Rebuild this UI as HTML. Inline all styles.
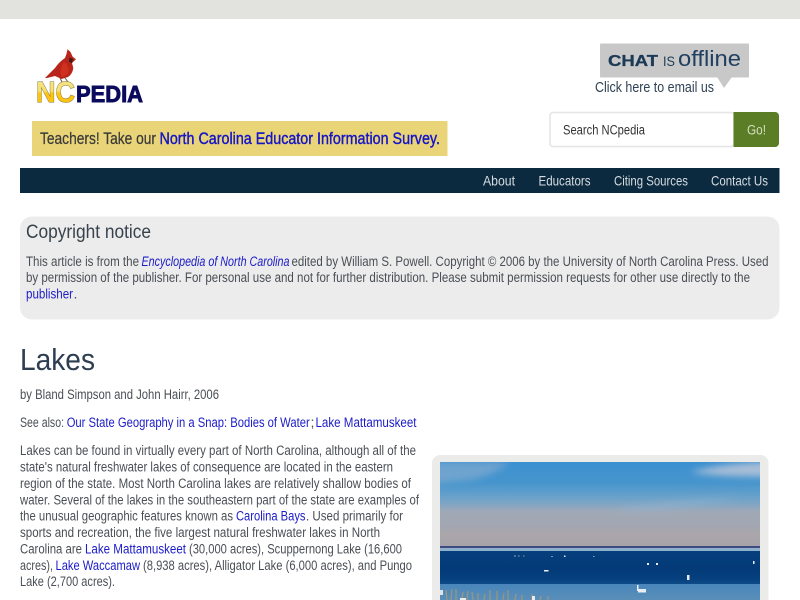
<!DOCTYPE html>
<html lang="en"><head><meta charset="utf-8"><title>Lakes | NCpedia</title>
<style>
html,body{margin:0;padding:0;background:#fff;width:800px;height:600px;overflow:hidden}
svg{display:block;filter:blur(.3px)}
text{font-family:"Liberation Sans",Arial,sans-serif;font-size:14.2px;fill:#4a4f55}
.l{fill:#1c1cc8}
.n{fill:#d5dbe0;font-size:14px}
</style></head><body>
<svg xmlns="http://www.w3.org/2000/svg" width="800" height="600" viewBox="0 0 800 600">
<defs>
<linearGradient id="sky" x1="0" y1="0" x2="0" y2="1">
<stop offset="0" stop-color="#3c90d0"/><stop offset=".25" stop-color="#4795cd"/><stop offset=".42" stop-color="#6ba2ca"/><stop offset=".58" stop-color="#98a9bc"/><stop offset=".85" stop-color="#aaa6ab"/><stop offset="1" stop-color="#a5a2a8"/>
</linearGradient>
<linearGradient id="wat" x1="0" y1="0" x2="0" y2="1">
<stop offset="0" stop-color="#063f7d"/><stop offset=".5" stop-color="#043a78"/><stop offset=".85" stop-color="#06407e"/><stop offset="1" stop-color="#0d4c88"/>
</linearGradient>
<linearGradient id="low" x1="0" y1="0" x2="0" y2="1">
<stop offset="0" stop-color="#4a86bb"/><stop offset="1" stop-color="#5a8fb8"/>
</linearGradient>
<linearGradient id="nc" x1="0" y1="0" x2="0" y2="1">
<stop offset="0" stop-color="#f5e58c"/><stop offset=".45" stop-color="#f5df70"/><stop offset=".5" stop-color="#fcc512"/><stop offset="1" stop-color="#fcc30c"/>
</linearGradient>
<filter id="soft" x="-20%" y="-50%" width="140%" height="200%"><feGaussianBlur stdDeviation="3.5"/></filter>
<clipPath id="ph"><rect x="440" y="462" width="320" height="138"/></clipPath>
</defs>
<rect width="800" height="600" fill="#fff"/>
<rect width="800" height="19" fill="#e2e2de"/>

<!-- logo -->
<path d="M45 78 L55 68 Q59 62 65 58 L66.5 54 L67.5 49.3 L70.5 52 L72.7 56.7 L76 59.3 L72 63 L73.3 68 Q72.5 74 68 77 L61.7 79 L55 76 L47 78 Z" fill="#b9241b"/>
<path d="M64 62 Q70 66 68 74 L62 77 Q58 72 64 62 Z" fill="#d0301f"/>
<path d="M69.5 57.5 L73 59 L72 63 L69 62 Z" fill="#3a1a14"/>
<path d="M60 78 L62 82 M65 78 L68 82" stroke="#6b5a40" stroke-width="1" fill="none"/>
<text x="36" y="102" textLength="39" lengthAdjust="spacingAndGlyphs" style="font-size:29px;font-weight:bold;fill:url(#nc);stroke:#7d7134;stroke-width:.9px;paint-order:stroke">NC</text>
<text x="76" y="102" textLength="67" lengthAdjust="spacingAndGlyphs" style="font-size:23px;font-weight:bold;fill:#0b0b5e;stroke:#0b0b5e;stroke-width:.9px">PEDIA</text>

<!-- banner -->
<rect x="32" y="121" width="415.5" height="35" fill="#e9d478"/>
<text x="40" y="144" textLength="116" lengthAdjust="spacingAndGlyphs" style="font-size:16.5px;fill:#3a3a3a;stroke:#3a3a3a;stroke-width:.25px">Teachers! Take our</text>
<a href="#"><text x="159.5" y="144" textLength="280.5" lengthAdjust="spacingAndGlyphs" style="font-size:16.5px;fill:#1414c8;stroke:#1414c8;stroke-width:.4px">North Carolina Educator Information Survey.</text></a>

<!-- chat -->
<rect x="600" y="43.5" width="149" height="34" rx="1" fill="#c8c8c8"/>
<path d="M717 77 L732 77 L724 88 Z" fill="#c8c8c8"/>
<text x="608" y="66" textLength="50" lengthAdjust="spacingAndGlyphs" style="font-size:16px;font-weight:bold;fill:#1b3a55;stroke:#1b3a55;stroke-width:.3px">CHAT</text>
<text x="663" y="66" textLength="12" lengthAdjust="spacingAndGlyphs" style="font-size:14px;fill:#1b3a55">IS</text>
<text x="678" y="66" textLength="63" lengthAdjust="spacingAndGlyphs" style="font-size:22px;fill:#1f4060">offline</text>
<a href="#"><text x="595" y="92" textLength="119" lengthAdjust="spacingAndGlyphs" style="font-size:14.5px;fill:#2f4256">Click here to email us</text></a>

<!-- search -->
<rect x="550" y="112.5" width="184" height="34" rx="3" fill="#fff" stroke="#e3e6e5" stroke-width="1.6"/>
<text x="563" y="134.5" textLength="82" lengthAdjust="spacingAndGlyphs" style="fill:#333">Search NCpedia</text>
<path d="M733.5 112 H775 a4 4 0 0 1 4 4 V143 a4 4 0 0 1 -4 4 H733.5 Z" fill="#5a7d26"/>
<text x="747" y="134.5" textLength="19" lengthAdjust="spacingAndGlyphs" style="fill:#d6dfc0">Go!</text>

<!-- nav -->
<rect x="20" y="168" width="759.5" height="25" fill="#0c2a3f"/>
<a href="#"><text class="n" x="483" y="185.5" textLength="32" lengthAdjust="spacingAndGlyphs">About</text></a>
<a href="#"><text class="n" x="538.5" y="185.5" textLength="52" lengthAdjust="spacingAndGlyphs">Educators</text></a>
<a href="#"><text class="n" x="614" y="185.5" textLength="74" lengthAdjust="spacingAndGlyphs">Citing Sources</text></a>
<a href="#"><text class="n" x="711" y="185.5" textLength="57" lengthAdjust="spacingAndGlyphs">Contact Us</text></a>

<!-- copyright box -->
<rect x="20" y="216.5" width="759.5" height="103" rx="12" fill="#ececec"/>
<text x="26" y="238" textLength="125" lengthAdjust="spacingAndGlyphs" style="font-size:19px;fill:#37424d">Copyright notice</text>
<text x="26" y="266" textLength="113" lengthAdjust="spacingAndGlyphs">This article is from the</text>
<a href="#"><text class="l" x="141.5" y="266" textLength="148" lengthAdjust="spacingAndGlyphs" style="font-style:italic">Encyclopedia of North Carolina</text></a>
<text x="291.5" y="266" textLength="477" lengthAdjust="spacingAndGlyphs">edited by William S. Powell. Copyright © 2006 by the University of North Carolina Press. Used</text>
<text x="26" y="282" textLength="724" lengthAdjust="spacingAndGlyphs">by permission of the publisher. For personal use and not for further distribution. Please submit permission requests for other use directly to the</text>
<a href="#"><text class="l" x="26" y="298.5" textLength="47" lengthAdjust="spacingAndGlyphs">publisher</text></a>
<text x="73.5" y="298.5">.</text>

<!-- title -->
<text x="20" y="370" textLength="75" lengthAdjust="spacingAndGlyphs" style="font-size:31px;fill:#2c3e50">Lakes</text>
<text x="20" y="399" textLength="199" lengthAdjust="spacingAndGlyphs">by Bland Simpson and John Hairr, 2006</text>
<text x="20" y="427" textLength="44" lengthAdjust="spacingAndGlyphs">See also:</text>
<a href="#"><text class="l" x="66.7" y="427" textLength="243" lengthAdjust="spacingAndGlyphs">Our State Geography in a Snap: Bodies of Water</text></a>
<text x="310.5" y="427">;</text>
<a href="#"><text class="l" x="315.5" y="427" textLength="101" lengthAdjust="spacingAndGlyphs">Lake Mattamuskeet</text></a>

<!-- paragraph -->
<text x="20" y="455" textLength="396" lengthAdjust="spacingAndGlyphs">Lakes can be found in virtually every part of North Carolina, although all of the</text>
<text x="20" y="471.5" textLength="373" lengthAdjust="spacingAndGlyphs">state's natural freshwater lakes of consequence are located in the eastern</text>
<text x="20" y="488" textLength="391" lengthAdjust="spacingAndGlyphs">region of the state. Most North Carolina lakes are relatively shallow bodies of</text>
<text x="20" y="504.5" textLength="399" lengthAdjust="spacingAndGlyphs">water. Several of the lakes in the southeastern part of the state are examples of</text>
<text x="20" y="520.5" textLength="213" lengthAdjust="spacingAndGlyphs">the unusual geographic features known as</text>
<a href="#"><text class="l" x="236" y="520.5" textLength="69.5" lengthAdjust="spacingAndGlyphs">Carolina Bays</text></a>
<text x="306" y="520.5" textLength="97" lengthAdjust="spacingAndGlyphs">. Used primarily for</text>
<text x="20" y="537" textLength="360" lengthAdjust="spacingAndGlyphs">sports and recreation, the five largest natural freshwater lakes in North</text>
<text x="20" y="553.5" textLength="62" lengthAdjust="spacingAndGlyphs">Carolina are</text>
<a href="#"><text class="l" x="85" y="553.5" textLength="101" lengthAdjust="spacingAndGlyphs">Lake Mattamuskeet</text></a>
<text x="189" y="553.5" textLength="213" lengthAdjust="spacingAndGlyphs">(30,000 acres), Scuppernong Lake (16,600</text>
<text x="20" y="570" textLength="33" lengthAdjust="spacingAndGlyphs">acres),</text>
<a href="#"><text class="l" x="55.5" y="570" textLength="84.5" lengthAdjust="spacingAndGlyphs">Lake Waccamaw</text></a>
<text x="143" y="570" textLength="269" lengthAdjust="spacingAndGlyphs">(8,938 acres), Alligator Lake (6,000 acres), and Pungo</text>
<text x="20" y="586" textLength="95" lengthAdjust="spacingAndGlyphs">Lake (2,700 acres).</text>

<!-- photo -->
<rect x="432" y="455" width="336.5" height="160" rx="8" fill="#ebebe9"/>
<g clip-path="url(#ph)">
<rect x="440" y="462" width="320" height="85" fill="url(#sky)"/>
<g filter="url(#soft)">
<path d="M430 462 H510 Q495 475 470 480 L430 484 Z" fill="#7fa9cf" opacity=".75"/>
<path d="M690 472 Q730 462 775 462 V476 Q730 478 690 472 Z" fill="#a8bed7"/>
<path d="M620 508 Q690 500 740 498 Q690 508 620 512 Z" fill="#8fb4d2" opacity=".7"/>
<path d="M430 510 H770 V520 H430 Z" fill="#a8a8b0" opacity=".5"/>
</g>
<rect x="440" y="546" width="320" height="2" fill="#3f4c82"/>
<rect x="440" y="548" width="320" height="3" fill="#8fb0cc"/>
<rect x="440" y="551" width="320" height="33" fill="url(#wat)"/>
<rect x="440" y="584" width="320" height="16" fill="url(#low)"/>
<g fill="#e8eef4">
<rect x="514" y="555.5" width="2" height="1" opacity=".6"/><rect x="518" y="555.5" width="1.5" height="1" opacity=".6"/><rect x="523" y="555.5" width="1.5" height="1" opacity=".5"/><rect x="551" y="556" width="2" height="1" opacity=".5"/><rect x="564" y="555.5" width="1.5" height="1.5"/><rect x="593" y="556" width="1.5" height="1" opacity=".6"/>
<rect x="647" y="563" width="2" height="2"/><rect x="656" y="563" width="2" height="2"/><rect x="753" y="561" width="1.5" height="3"/>
<rect x="544" y="570" width="4.5" height="1.5"/><rect x="687" y="575" width="2.5" height="5"/>
<rect x="638" y="589" width="8" height="3.5"/><rect x="637" y="585" width="1.5" height="6"/>
</g>
<g stroke="#b59a6c" stroke-width="1.2" opacity=".75" fill="none">
<path d="M447 600 L446 590 M451 600 L452 589 M456 600 L456 589 M462 600 L463 592 M467 600 L468 591 M473 600 L472 592 M478 600 L478 593 M484 600 L485 594 M490 600 L490 590 M497 600 L497 591 M503 600 L504 593 M508 600 L508 590 M515 600 L516 594 M522 600 L522 595 M532 600 L532 594 M540 600 L541 596 M548 600 L548 596"/>
</g>
<rect x="440" y="590" width="3" height="5" fill="#dfe4e8"/><rect x="460" y="598" width="6" height="2" fill="#e8ecef"/><rect x="532" y="596" width="3" height="4" fill="#e8ecef"/>
</g>
</svg>
</body></html>
